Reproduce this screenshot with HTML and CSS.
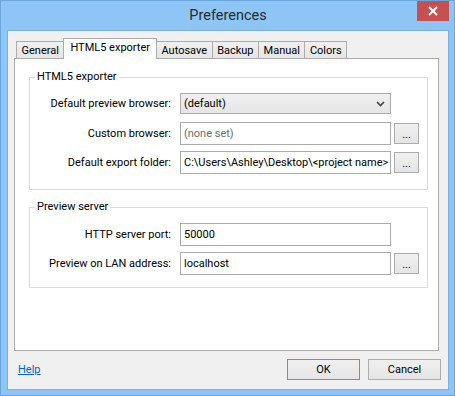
FILE: index.html
```html
<!DOCTYPE html>
<html>
<head>
<meta charset="utf-8">
<link rel="stylesheet" href="styles.css">
</head>
<body>
<div class="window">
  <div class="titlebar">
    <span class="title">Preferences</span>
    <div class="close"><svg width="10" height="10" viewBox="0 0 10 10"><path d="M1 1 L9 9 M9 1 L1 9" stroke="#fff" stroke-width="2"/></svg></div>
  </div>
  <div class="client">
    <div class="tabs">
      <div class="tab">General</div>
      <div class="tab active">HTML5 exporter</div>
      <div class="tab">Autosave</div>
      <div class="tab">Backup</div>
      <div class="tab">Manual</div>
      <div class="tab">Colors</div>
    </div>
    <div class="panel">
      <fieldset class="group">
        <legend>HTML5 exporter</legend>
        <div class="grid">
          <label class="lbl top">Default preview browser:</label>
          <div class="select">(default)<svg class="chev" width="9" height="6" viewBox="0 0 9 6"><path d="M1 1 L4.5 4.5 L8 1" fill="none" stroke="#444" stroke-width="1.6"/></svg></div>
          <span></span>
          <label class="lbl">Custom browser:</label>
          <div class="input placeholder">(none set)</div>
          <div class="browse">...</div>
          <label class="lbl">Default export folder:</label>
          <div class="input">C:\Users\Ashley\Desktop\&lt;project name&gt;</div>
          <div class="browse">...</div>
        </div>
      </fieldset>
      <fieldset class="group server">
        <legend>Preview server</legend>
        <div class="grid">
          <label class="lbl">HTTP server port:</label>
          <div class="input">50000</div>
          <span></span>
          <label class="lbl">Preview on LAN address:</label>
          <div class="input">localhost</div>
          <div class="browse">...</div>
        </div>
      </fieldset>
    </div>
    <div class="footer">
      <a class="help" href="#">Help</a>
      <div class="buttons">
        <div class="btn default">OK</div>
        <div class="btn">Cancel</div>
      </div>
    </div>
  </div>
</div>
</body>
</html>
```
FILE: styles.css
```css
* { box-sizing: border-box; }
html, body { margin: 0; padding: 0; }
body { font-family: Roboto, "Noto Sans", sans-serif; font-size: 11px; color: #000; }
.window {
  width: 455px; height: 396px;
  background: #8cc5f6;
  border: 1px solid #6aa6de;
  display: flex; flex-direction: column;
  padding: 0 5px 5px 6px;
}
.titlebar {
  height: 29px;
  display: grid;
  grid-template-columns: 1fr auto 1fr;
  align-items: start;
}
.title {
  grid-column: 2;
  font-size: 14.5px; line-height: 30px; color: #2b2b2b;
}
.close {
  grid-column: 3; justify-self: end;
  width: 32px; height: 20px;
  background: #c75050;
  display: flex; align-items: center; justify-content: center;
}
.client {
  flex: 1;
  background: #f0f0f0;
  border: 1px solid #78b0e0;
  padding: 7px 9px 0 6px;
  display: flex; flex-direction: column;
}
.tabs {
  display: flex; align-items: flex-end;
  height: 20px;
  padding-left: 2px;
  position: relative; z-index: 1;
}
.tab {
  height: 17px;
  border: 1px solid #acacac; border-bottom: none;
  background: linear-gradient(#f0f0f0, #e5e5e5);
  padding: 0 4.5px;
  line-height: 17px;
  margin-right: -1px;
}
.tab.active {
  height: 21px;
  background: #fff;
  margin-bottom: -1px;
  padding: 0 6px;
  line-height: 18px;
}
.panel {
  height: 293px;
  background: #fff;
  border: 1px solid #acacac;
  padding: 10px 10px 0 14px;
}
.group {
  margin: 0 0 9px 0;
  border: 1px solid #dcdcdc;
  padding: 8px 0 15px 0;
}
.group.server { padding-bottom: 12px; }
.group legend {
  line-height: 16px; padding: 0 2px; margin-left: 5px;
}
.grid {
  display: grid;
  grid-template-columns: 147px 211px 25px;
  grid-auto-rows: 23px;
  column-gap: 3px; row-gap: 6px;
  align-items: center;
}
.lbl { text-align: right; padding-right: 6px; white-space: nowrap; }
.lbl.top { align-self: start; line-height: 21px; }
.select {
  align-self: start;
  height: 21px;
  border: 1px solid #acacac;
  background: linear-gradient(#f0f0f0, #e5e5e5);
  padding-left: 3px; line-height: 19px;
  display: flex; justify-content: space-between; align-items: center;
}
.chev { margin-right: 5px; }
.input {
  height: 23px;
  border: 1px solid #acacac;
  background: #fff;
  padding-left: 3px; line-height: 21px;
  white-space: nowrap; overflow: hidden;
}
.placeholder { color: #6d6d6d; }
.browse {
  height: 21px;
  border: 1px solid #acacac;
  background: linear-gradient(#f0f0f0, #e5e5e5);
  text-align: center; line-height: 21px;
}
.footer {
  display: flex; justify-content: space-between; align-items: center;
  padding: 8px 0 0 4px;
  margin-right: -2px;
}
.help { color: #0066cc; text-decoration: underline; }
.buttons { display: flex; gap: 8px; }
.btn {
  width: 73px; height: 21px;
  border: 1px solid #acacac;
  background: linear-gradient(#f0f0f0, #e5e5e5);
  text-align: center; line-height: 19px;
}
.btn.default { border-color: #4a9ae6; }
```
